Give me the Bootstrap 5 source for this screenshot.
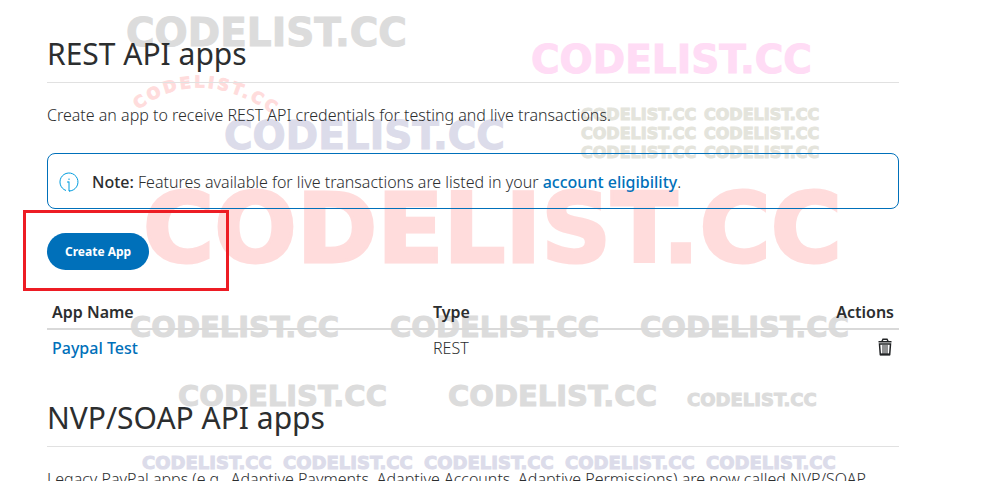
<!DOCTYPE html>
<html lang="en">
<head>
<meta charset="utf-8">
<meta name="viewport" content="width=device-width, initial-scale=1">
<title>REST API apps</title>
<link href="https://cdn.jsdelivr.net/npm/bootstrap@5.3.0/dist/css/bootstrap.min.css" rel="stylesheet">
<style>
body { font-family: "Noto Sans", "Open Sans", sans-serif; font-size: 16px; line-height: 24px; font-weight: 350; color: #2c2e2f; background: #fff; }
.page-main { padding: 36px 82px 0 47px; overflow: hidden; isolation: isolate; }
.section-title { font-size: 30px; line-height: 36px; font-weight: 400; padding-bottom: 10px; border-bottom: 1px solid #e1e1e1; margin: 0; }
.lead-in { margin: 20px 0 26px; }
.page-main a { color: #0070ba; font-weight: 500; text-decoration: none; }
.note-box { border: 1px solid #0070ba; border-radius: 8px; padding: 16px 11px 14px; gap: 13px; margin-bottom: 24px; }
.note-box strong { font-weight: 500; }
.btn-create { background: #0070ba; color: #fff; border-radius: 19px; font-size: 12px; line-height: 19px; font-weight: 700; padding: 9px 18px; border: 0; }
.btn-create:hover { background: #005ea6; color: #fff; }
.highlight-frame { position: absolute; left: -24px; top: -23px; width: 206px; height: 81px; border: 3px solid #ed1c24; pointer-events: none; }
.apps-table { margin: 30px 0 36px; --bs-table-bg: transparent; color: inherit; table-layout: fixed; }
.apps-table th { font-weight: 600; padding: 0 5px 4px; border-bottom: 2px solid #d9d9d9; }
.apps-table th:first-child { width: 381px; }
.apps-table td { padding: 6px 5px 4px; border: 0; }
.trash-btn { border: 0; padding: 2px 2px 0 0; background: none; display: inline-block; vertical-align: top; }
.stamps { z-index: -1; pointer-events: none; font-family: "DejaVu Sans", sans-serif; font-weight: 700; }
.stamp-xl { font-size: 97px; stroke-width: 3px; }
.stamp-lg { font-size: 39px; stroke-width: 1px; }
.stamp-md { font-size: 29px; stroke-width: 1px; }
.stamp-sm { font-size: 18px; stroke-width: 1px; }
.stamp-xs { font-size: 16px; stroke-width: 1px; }
.ink-grey { fill: #dcdcdc; stroke: #dcdcdc; }
.ink-pink { fill: #ffdcf5; stroke: #ffdcf5; }
.ink-red { fill: #ffdcdc; stroke: #ffdcdc; }
.ink-blue { fill: #dcdcea; stroke: #dcdcea; }
.ink-olive { fill: #e4e4dc; stroke: #e4e4dc; }
</style>
</head>
<body>
<main class="page-main position-relative vh-100">
  <svg class="stamps position-absolute top-0 start-0" width="981" height="481" aria-hidden="true">
    <g class="stamp-lg">
      <text x="126" y="46" class="ink-grey">CODELIST.CC</text>
      <text x="531" y="73" class="ink-pink">CODELIST.CC</text>
      <text x="224" y="149" class="ink-blue">CODELIST.CC</text>
    </g>
    <text x="143" y="262" class="stamp-xl ink-red">CODELIST.CC</text>
    <g class="stamp-md ink-grey">
      <text x="130" y="337">CODELIST.CC</text>
      <text x="390" y="337">CODELIST.CC</text>
      <text x="640" y="337">CODELIST.CC</text>
      <text x="178" y="406">CODELIST.CC</text>
      <text x="448" y="406">CODELIST.CC</text>
    </g>
    <text x="687" y="406" class="stamp-sm ink-grey">CODELIST.CC</text>
    <g class="stamp-sm ink-blue">
      <text x="142" y="469">CODELIST.CC</text>
      <text x="283" y="469">CODELIST.CC</text>
      <text x="424" y="469">CODELIST.CC</text>
      <text x="565" y="469">CODELIST.CC</text>
      <text x="706" y="469">CODELIST.CC</text>
    </g>
    <g class="stamp-xs ink-olive">
      <text x="581" y="120">CODELIST.CC</text><text x="704" y="120">CODELIST.CC</text>
      <text x="581" y="139">CODELIST.CC</text><text x="704" y="139">CODELIST.CC</text>
      <text x="581" y="158">CODELIST.CC</text><text x="704" y="158">CODELIST.CC</text>
    </g>
    <path id="arc" d="M138 110 Q205 58 290 126" fill="none"/>
    <text class="stamp-xs ink-red" letter-spacing="3"><textPath href="#arc">CODELIST.CC</textPath></text>
  </svg>

  <h1 class="section-title">REST API apps</h1>
  <p class="lead-in">Create an app to receive REST API credentials for testing and live transactions.</p>

  <div class="note-box d-flex align-items-center">
    <svg width="20" height="20" viewBox="0 0 20 20" fill="none" stroke="#009cde" aria-hidden="true">
      <path d="M7 18.500A9 9 0 1 1 10 19V9.500M8 10h2M10 19h1" />
      <path d="M10 6.500v1.500"/>
    </svg>
    <div><strong>Note:</strong> Features available for live transactions are listed in your <a href="#">account eligibility</a>.</div>
  </div>

  <div class="position-relative">
    <button type="button" class="btn btn-create d-block">Create App</button>
    <div class="highlight-frame"></div>
  </div>

  <table class="table apps-table">
    <thead>
      <tr><th scope="col">App Name</th><th scope="col">Type</th><th scope="col" class="text-end">Actions</th></tr>
    </thead>
    <tbody>
      <tr>
        <td><a href="#">Paypal Test</a></td>
        <td>REST</td>
        <td class="text-end">
          <button type="button" class="trash-btn" aria-label="Delete Paypal Test">
            <svg class="d-block" width="14" height="18" viewBox="0 0 14 18" fill="none" stroke="#222426">
              <path d="M.5 3.800h13M4 3.300 5 1.200h4l1 2.100" stroke-width="1.500"/>
              <path d="M1.500 6h11l-.8 10.500H2.300z" stroke-width="1.500"/>
              <path d="M5 7v9M7 7v9M9 7v9"/>
              <path d="M2 16.500h10" stroke-width="2"/>
            </svg>
          </button>
        </td>
      </tr>
    </tbody>
  </table>

  <h2 class="section-title">NVP/SOAP API apps</h2>
  <p class="lead-in text-nowrap">Legacy PayPal apps (e.g., Adaptive Payments, Adaptive Accounts, Adaptive Permissions) are now called NVP/SOAP</p>
</main>
<script src="https://cdn.jsdelivr.net/npm/bootstrap@5.3.0/dist/js/bootstrap.bundle.min.js"></script>
</body>
</html>
